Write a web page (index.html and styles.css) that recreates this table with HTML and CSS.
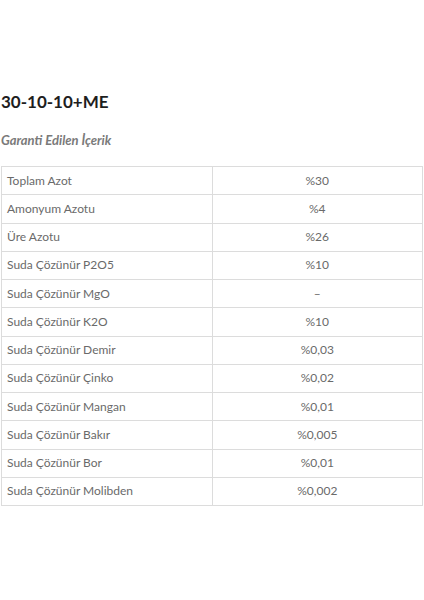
FILE: index.html
```html
<!DOCTYPE html>
<html lang="tr">
<head>
<meta charset="utf-8">
<link rel="stylesheet" href="styles.css">
</head>
<body>
<main class="page">
  <h1 class="title">30-10-10+ME</h1>
  <p class="subtitle">Garanti Edilen İçerik</p>
  <table class="spec">
    <tbody>
      <tr><td>Toplam Azot</td><td>%30</td></tr>
      <tr><td>Amonyum Azotu</td><td>%4</td></tr>
      <tr><td>Üre Azotu</td><td>%26</td></tr>
      <tr><td>Suda Çözünür P2O5</td><td>%10</td></tr>
      <tr><td>Suda Çözünür MgO</td><td>–</td></tr>
      <tr><td>Suda Çözünür K2O</td><td>%10</td></tr>
      <tr><td>Suda Çözünür Demir</td><td>%0,03</td></tr>
      <tr><td>Suda Çözünür Çinko</td><td>%0,02</td></tr>
      <tr><td>Suda Çözünür Mangan</td><td>%0,01</td></tr>
      <tr><td>Suda Çözünür Bakır</td><td>%0,005</td></tr>
      <tr><td>Suda Çözünür Bor</td><td>%0,01</td></tr>
      <tr><td>Suda Çözünür Molibden</td><td>%0,002</td></tr>
    </tbody>
  </table>
</main>
</body>
</html>
```
FILE: styles.css
```css
html, body {
  margin: 0;
  padding: 0;
  background: #ffffff;
}
.page {
  padding: 92px 1px 0 1px;
  font-family: Lato, "Noto Sans", sans-serif;
}
.title {
  margin: 0;
  font-size: 17px;
  line-height: 20px;
  font-weight: 700;
  color: #1e1e1e;
}
.subtitle {
  margin: 20px 0 0 0;
  font-size: 13px;
  line-height: 16px;
  font-weight: 700;
  font-style: italic;
  color: #7a7a7a;
}
.spec {
  margin-top: 18px;
  width: 100%;
  border-collapse: collapse;
  font-size: 12px;
  color: #6a6a6a;
}
.spec td {
  border: 1px solid #dcdcdc;
  height: 27.25px;
  padding: 0 5px;
  line-height: 16px;
  vertical-align: middle;
  width: 50%;
}
.spec td + td {
  text-align: center;
}
```
